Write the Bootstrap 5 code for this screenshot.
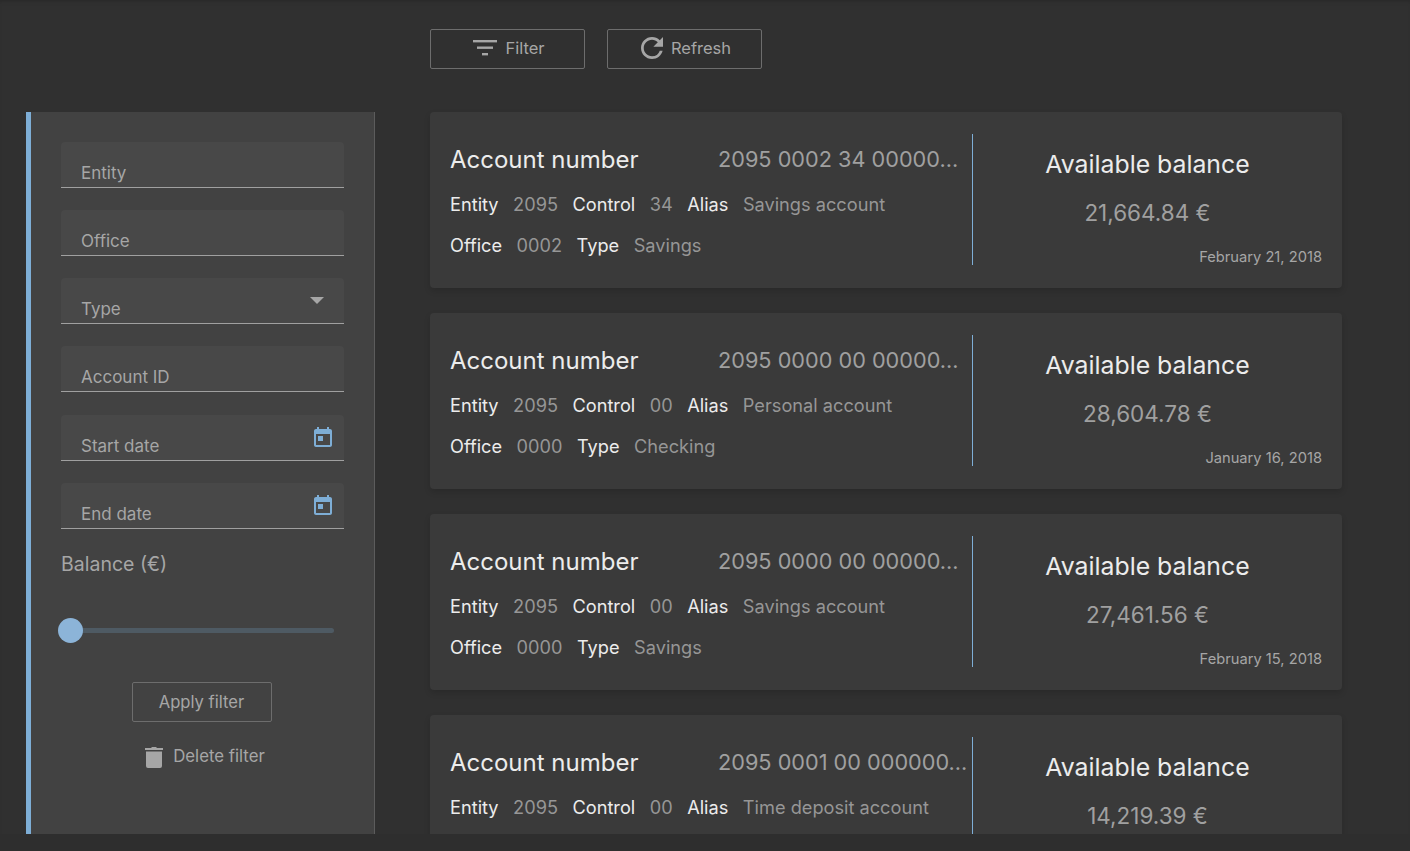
<!DOCTYPE html>
<html lang="en">
<head>
<meta charset="UTF-8">
<meta name="viewport" content="width=device-width, initial-scale=1">
<title>Accounts</title>
<link href="https://cdn.jsdelivr.net/npm/bootstrap@5.3.0/dist/css/bootstrap.min.css" rel="stylesheet">
<style>
html, body { height: 100%; overflow: hidden; }
body { background: #303030; font-family: Inter, "Open Sans", sans-serif; color: #a6a6a6; }
.page-wrap { height: 851px; background: #2e2e2e; }
.page-top { height: 834px; background: #303030; padding: 29px 0 0 26px; overflow: hidden; box-shadow: inset 0 4px 4px -3px #282828; }
.tool-row { margin-left: 404px; height: 83px; gap: 22px; }
.tool-btn { width: 155px; height: 40px; border: 1px solid #6d6d6d; border-radius: 2px; background: transparent; color: #a6a6a6; font-size: 16.5px; padding: 0 0 2px 3px; }
.filter-panel { width: 349px; height: 722px; flex: none; background: #424242; border-left: 5px solid #7eaed6; border-right: 1px solid #5c5c5c; padding: 30px 30px 0; }
.filter-field { height: 46px; width: 283px; background: #484848; border-radius: 4px 4px 0 0; border-bottom: 1px solid #a0a0a0; padding: 0 20px 5px; font-size: 17px; color: #a6a6a6; margin-bottom: 22px; line-height: 18px; position: relative; }
.field-gap { margin-bottom: 23px; }
.field-caret { position: absolute; right: 20px; top: 19px; width: 0; height: 0; border-left: 7px solid transparent; border-right: 7px solid transparent; border-top: 7px solid #a6a6a6; }
.field-icon { position: absolute; right: 9px; top: 11px; }
.balance-label { font-size: 19.5px; padding-top: 1px; line-height: 24px; color: #a6a6a6; }
.slide-track { width: 273px; height: 5px; background: #4e5a63; border-radius: 3px; margin-top: 52px; position: relative; }
.slide-thumb { position: absolute; left: -3px; top: -10px; width: 25px; height: 25px; border-radius: 50%; background: #8cb4d8; }
.apply-btn { width: 140px; height: 40px; border: 1px solid #6d6d6d; border-radius: 2px; background: transparent; color: #a6a6a6; font-size: 16.6px; padding: 0; margin-top: 49px; margin-left: -2px; }
.delete-link { margin-top: 22px; font-size: 16.8px; gap: 9px; color: #a6a6a6; margin-left: 4px; }
.list-col { margin-left: 55px; width: 912px; flex: none; }
.acct-card { height: 176px; background: #3a3a3a; border: 0; border-radius: 4px; box-shadow: 0 3px 6px rgba(0,0,0,.14); margin-bottom: 25px; padding: 22px 0 23px 20px; }
.acct-left { width: 523px; flex: none; border-right: 1px solid #7eaed6; }
.acct-head { height: 50px; padding-top: 1px; }
.acct-title { width: 268px; flex: none; font-size: 24px; color: #ececec; line-height: 49px; }
.acct-num { font-size: 21.7px; color: #a0a0a0; line-height: 48px; white-space: nowrap; }
.acct-line { font-size: 18.2px; line-height: 24px; height: 41px; padding-top: 8px; gap: 14.5px; white-space: nowrap; color: #969696; }
.acct-line b { font-weight: 400; color: #ececec; }
.acct-right { flex: 1; padding-right: 20px; text-align: center; }
.bal-title { font-size: 24.8px; color: #ececec; line-height: 30px; margin-top: 15px; }
.bal-value { font-size: 22.5px; color: #a0a0a0; line-height: 30px; margin-top: 19px; }
.bal-date { font-size: 14.7px; color: #a6a6a6; text-align: right; line-height: 20px; margin-top: 19px; }
</style>
</head>
<body>
<div class="page-wrap">
<div class="page-top">
    <div class="d-flex tool-row">
        <button class="btn tool-btn d-flex align-items-center justify-content-center gap-2">
            <svg width="24" height="16" viewBox="0 0 24 16" fill="#a6a6a6"><rect y="0" width="24" height="2.4"/><rect x="4" y="6.5" width="16" height="2.4"/><rect x="9" y="13" width="6" height="2.4"/></svg>
            Filter
        </button>
        <button class="btn tool-btn d-flex align-items-center justify-content-center gap-2">
            <svg width="22" height="22" viewBox="4 4 16 16" fill="#a6a6a6"><path d="M17.65 6.35A7.958 7.958 0 0 0 12 4c-4.42 0-7.99 3.58-7.99 8s3.57 8 7.99 8c3.73 0 6.84-2.55 7.73-6h-2.08A5.99 5.99 0 0 1 12 18c-3.31 0-6-2.69-6-6s2.69-6 6-6c1.66 0 3.14.69 4.22 1.78L13 11h7V4l-2.35 2.35z"/></svg>
            Refresh
        </button>
    </div>
    <div class="d-flex align-items-start">
        <aside class="filter-panel">
            <div class="filter-field d-flex align-items-end">Entity</div>
            <div class="filter-field d-flex align-items-end">Office</div>
            <div class="filter-field d-flex align-items-end">Type<span class="field-caret"></span></div>
            <div class="filter-field field-gap d-flex align-items-end">Account ID</div>
            <div class="filter-field d-flex align-items-end">Start date
                <svg class="field-icon" width="24" height="24" viewBox="0 0 24 24" fill="#7eaed6"><path d="M19 3h-1V1h-2v2H8V1H6v2H5c-1.1 0-2 .9-2 2v14c0 1.1.9 2 2 2h14c1.1 0 2-.9 2-2V5c0-1.100-.9-2-2-2zm0 16H5V8h14v11zM7 10h5v5H7z"/></svg>
            </div>
            <div class="filter-field d-flex align-items-end">End date
                <svg class="field-icon" width="24" height="24" viewBox="0 0 24 24" fill="#7eaed6"><path d="M19 3h-1V1h-2v2H8V1H6v2H5c-1.1 0-2 .9-2 2v14c0 1.1.9 2 2 2h14c1.1 0 2-.9 2-2V5c0-1.100-.9-2-2-2zm0 16H5V8h14v11zM7 10h5v5H7z"/></svg>
            </div>
            <div class="balance-label">Balance (€)</div>
            <div class="slide-track"><span class="slide-thumb"></span></div>
            <div class="text-center"><button class="btn apply-btn">Apply filter</button></div>
            <div class="delete-link d-flex align-items-center justify-content-center">
                <svg width="20" height="24" viewBox="0 0 20 24" fill="#a6a6a6"><path d="M1 3h6l1-1h4l1 1h6v2H1zM2 6.500h16V21a2 2 0 0 1-2 2H4a2 2 0 0 1-2-2z"/></svg>
                Delete filter
            </div>
        </aside>
        <main class="list-col">
            <div class="card acct-card flex-row">
                <div class="acct-left">
                    <div class="d-flex acct-head"><div class="acct-title">Account number</div><div class="acct-num">2095 0002 34 00000…</div></div>
                    <div class="d-flex acct-line"><b>Entity</b><span>2095</span><b>Control</b><span>34</span><b>Alias</b><span>Savings account</span></div>
                    <div class="d-flex acct-line"><b>Office</b><span>0002</span><b>Type</b><span>Savings</span></div>
                </div>
                <div class="acct-right">
                    <div class="bal-title">Available balance</div>
                    <div class="bal-value">21,664.84 €</div>
                    <div class="bal-date">February 21, 2018</div>
                </div>
            </div>
            <div class="card acct-card flex-row">
                <div class="acct-left">
                    <div class="d-flex acct-head"><div class="acct-title">Account number</div><div class="acct-num">2095 0000 00 00000…</div></div>
                    <div class="d-flex acct-line"><b>Entity</b><span>2095</span><b>Control</b><span>00</span><b>Alias</b><span>Personal account</span></div>
                    <div class="d-flex acct-line"><b>Office</b><span>0000</span><b>Type</b><span>Checking</span></div>
                </div>
                <div class="acct-right">
                    <div class="bal-title">Available balance</div>
                    <div class="bal-value">28,604.78 €</div>
                    <div class="bal-date">January 16, 2018</div>
                </div>
            </div>
            <div class="card acct-card flex-row">
                <div class="acct-left">
                    <div class="d-flex acct-head"><div class="acct-title">Account number</div><div class="acct-num">2095 0000 00 00000…</div></div>
                    <div class="d-flex acct-line"><b>Entity</b><span>2095</span><b>Control</b><span>00</span><b>Alias</b><span>Savings account</span></div>
                    <div class="d-flex acct-line"><b>Office</b><span>0000</span><b>Type</b><span>Savings</span></div>
                </div>
                <div class="acct-right">
                    <div class="bal-title">Available balance</div>
                    <div class="bal-value">27,461.56 €</div>
                    <div class="bal-date">February 15, 2018</div>
                </div>
            </div>
            <div class="card acct-card flex-row">
                <div class="acct-left">
                    <div class="d-flex acct-head"><div class="acct-title">Account number</div><div class="acct-num">2095 0001 00 000000…</div></div>
                    <div class="d-flex acct-line"><b>Entity</b><span>2095</span><b>Control</b><span>00</span><b>Alias</b><span>Time deposit account</span></div>
                </div>
                <div class="acct-right">
                    <div class="bal-title">Available balance</div>
                    <div class="bal-value">14,219.39 €</div>
                </div>
            </div>
        </main>
    </div>
</div>
</div>
<script src="https://cdn.jsdelivr.net/npm/bootstrap@5.3.0/dist/js/bootstrap.bundle.min.js"></script>
</body>
</html>
